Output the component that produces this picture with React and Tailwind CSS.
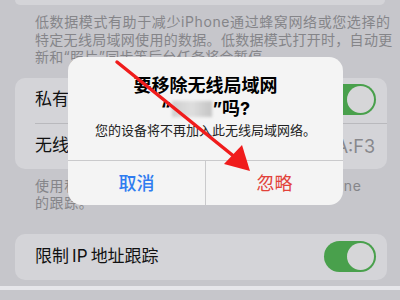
const font = { fontFamily: '"Inter", "Noto Sans CJK SC", sans-serif' };

function Toggle({ className = '' }) {
  return (
    <div className={`flex h-[31px] w-[52px] items-center justify-end rounded-full bg-[#49a04c] p-[2px] ${className}`}>
      <div className="h-[27px] w-[27px] rounded-full bg-[#d6d6d8]" />
    </div>
  );
}

function Dialog() {
  return (
    <div className="absolute left-[68px] top-[57px] flex h-[148px] w-[275px] flex-col rounded-[14px] bg-[#f4f4f4]">
      <div className="flex flex-1 flex-col items-center pt-[17px]">
        <p className="text-[18px] font-bold leading-[23px] text-black">要移除无线局域网</p>
        <p className="flex items-center text-[18px] font-bold leading-[23px] text-black">
          <span>“</span>
          <span className="mx-[1px] h-[16px] w-[40px] bg-gradient-to-r from-[#cfcfcf] via-[#dedede] to-[#c4c4c4] blur-[1.5px]" />
          <span>”吗?</span>
        </p>
        <p className="mt-[2px] text-[13px] leading-[16px] text-[#222]">您的设备将不再加入此无线局域网络。</p>
      </div>
      <div className="flex h-[45px] border-t border-[#cacacc]">
        <div className="flex flex-1 items-center justify-center text-[18px] font-medium text-[#2f7cf0]">取消</div>
        <div className="flex flex-1 items-center justify-center border-l border-[#cacacc] text-[18px] text-[#e2423a]">忽略</div>
      </div>
    </div>
  );
}

export default function App() {
  return (
    <div className="relative h-[300px] w-[400px] overflow-hidden bg-[#c6c6cb]" style={font}>
      <div className="mx-[15px] h-[5px] rounded-b-[10px] bg-[#d4d4d8]" />
      <p className="mt-[8px] whitespace-nowrap pl-[35px] text-[14px] leading-[17.5px] tracking-[0.3px] text-[#858589]">
        <span className="tracking-[0.6px]">低数据模式有助于减少iPhone通过蜂窝网络或您选择的</span>
        <br />
        特定无线局域网使用的数据。低数据模式打开时，自动更
        <br />
        新和“照片”同步等后台任务将会暂停。
      </p>

      <div className="mx-[15px] mt-[12px] w-[372px] rounded-[10px] bg-[#d4d4d8]">
        <div className="flex h-[45px] items-center justify-between pl-[20px] pr-[11px]">
          <span className="text-[17px] text-[#111]">私有无线局域网地址</span>
          <Toggle className="-mt-[1px]" />
        </div>
        <div className="ml-[20px] h-px bg-[#b9b9bd]" />
        <div className="flex h-[45px] items-center justify-between pl-[20px] pr-[12px]">
          <span className="text-[17px] text-[#111]">无线局域网地址</span>
          <span className="text-[18px] text-[#88888c]">6E:2B:9A:F3</span>
        </div>
      </div>

      <p className="mt-[8px] whitespace-nowrap pl-[35px] text-[14px] leading-[17px] tracking-[0.6px] text-[#858589]">
        使用私有地址有助于降低不同无线局域网对iPhone
        <br />
        的跟踪。
      </p>

      <div className="mx-[15px] mt-[23px] flex h-[46px] w-[372px] items-center justify-between rounded-[10px] bg-[#d4d4d8] pl-[20px] pr-[11px]">
        <span className="text-[17px] text-[#111]">限制{'\u2009'}IP{'\u2009'}地址跟踪</span>
        <Toggle />
      </div>
      <div className="mt-[6px] h-[4px] bg-[#e6e6ea]" />

      <Dialog />

      <svg className="pointer-events-none absolute left-0 top-0" width="400" height="300" viewBox="0 0 400 300">
        <line x1="117" y1="62" x2="236" y2="158" stroke="#f01c1c" strokeWidth="3.5" strokeLinecap="round" />
        <polygon points="250,171 224,164 242,145" fill="#f01c1c" />
      </svg>
    </div>
  );
}
